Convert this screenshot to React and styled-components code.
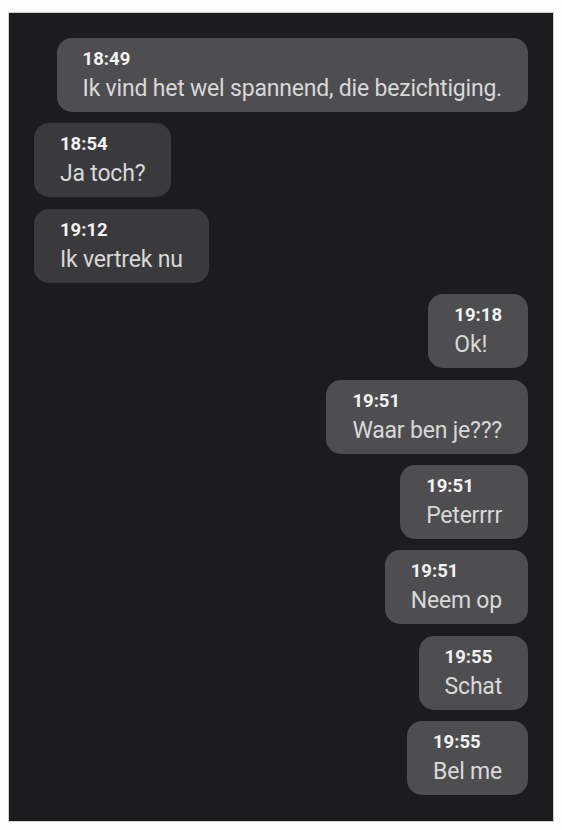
import React from 'react'
import styled, { createGlobalStyle } from 'styled-components'

const Global = createGlobalStyle`
  html, body {
    margin: 0;
    padding: 0;
    background: #fdfdfd;
  }
  body {
    font-family: Roboto, "Liberation Sans", sans-serif;
  }
`

const Page = styled.div`
  padding: 13px 9px 9px 9px;
`

const Panel = styled.div`
  background: #1c1c1e;
  height: 808px;
  box-sizing: border-box;
  padding: 25px 25px;
  display: flex;
  flex-direction: column;
  gap: 11.4px;
  box-shadow: 0 0 0 1px #cfcfcf;
`

const Bubble = styled.div`
  align-self: ${props => (props.mine ? 'flex-end' : 'flex-start')};
  background: ${props => (props.mine ? '#4e4e50' : '#3a3a3c')};
  border-radius: 15px;
  height: 74px;
  box-sizing: border-box;
  padding: 9px 26px 0 26px;
  display: flex;
  flex-direction: column;
`

const Time = styled.div`
  color: #f2f2f2;
  font-weight: 700;
  font-size: 18.5px;
  line-height: 24px;
`

const Text = styled.div`
  color: #d8d8d8;
  font-size: 23px;
  letter-spacing: -0.2px;
  line-height: 30px;
  margin-top: 3px;
`

const messages = [
  { time: '18:49', text: 'Ik vind het wel spannend, die bezichtiging.', mine: true },
  { time: '18:54', text: 'Ja toch?' },
  { time: '19:12', text: 'Ik vertrek nu' },
  { time: '19:18', text: 'Ok!', mine: true },
  { time: '19:51', text: 'Waar ben je???', mine: true },
  { time: '19:51', text: 'Peterrrr', mine: true },
  { time: '19:51', text: 'Neem op', mine: true },
  { time: '19:55', text: 'Schat', mine: true },
  { time: '19:55', text: 'Bel me', mine: true },
]

export default function App () {
  return (
    <Page>
      <Global />
      <Panel>
        {messages.map((m, i) => (
          <Bubble key={i} mine={m.mine}>
            <Time>{m.time}</Time>
            <Text>{m.text}</Text>
          </Bubble>
        ))}
      </Panel>
    </Page>
  )
}
